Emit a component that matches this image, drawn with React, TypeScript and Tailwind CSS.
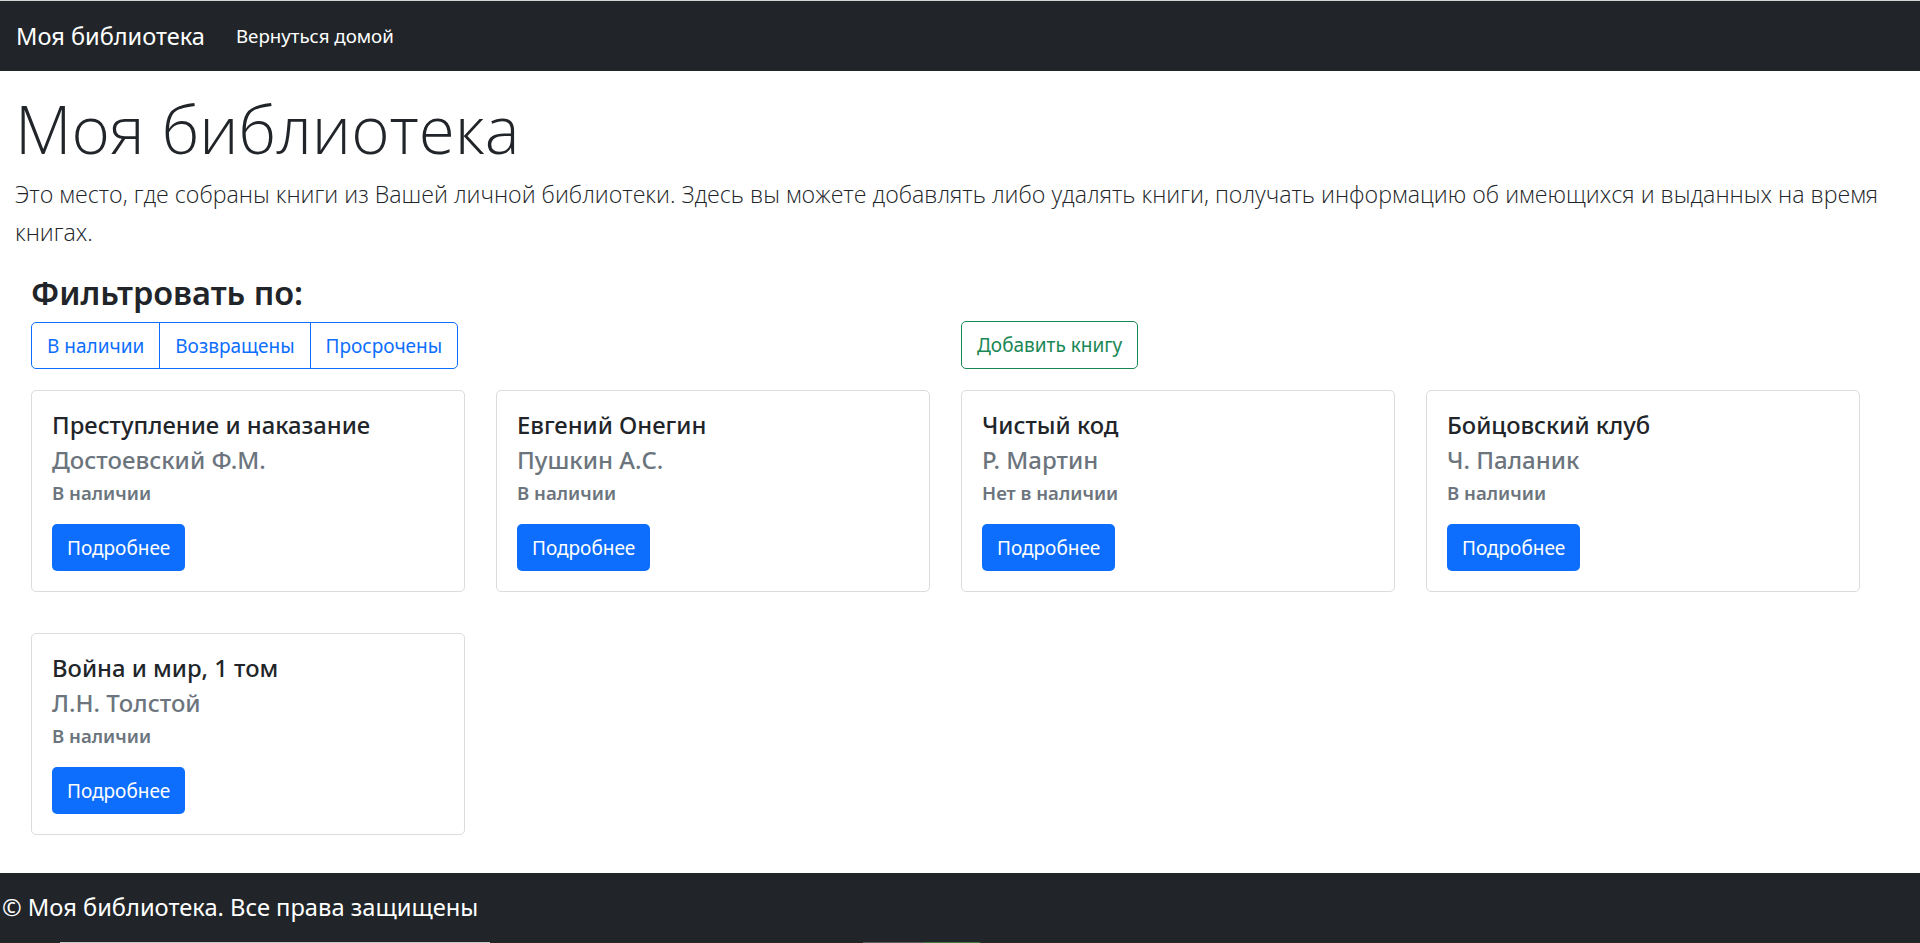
import React from 'react';

interface Book {
  id: number;
  title: string;
  author: string;
  status: string;
}

const books: Book[] = [
  { id: 1, title: 'Преступление и наказание', author: 'Достоевский Ф.М.', status: 'В наличии' },
  { id: 2, title: 'Евгений Онегин', author: 'Пушкин А.С.', status: 'В наличии' },
  { id: 3, title: 'Чистый код', author: 'Р. Мартин', status: 'Нет в наличии' },
  { id: 4, title: 'Бойцовский клуб', author: 'Ч. Паланик', status: 'В наличии' },
  { id: 5, title: 'Война и мир, 1 том', author: 'Л.Н. Толстой', status: 'В наличии' },
];

const filters = ['В наличии', 'Возвращены', 'Просрочены'];

const BookCard: React.FC<{ book: Book }> = ({ book }) => (
  <div className="h-[202px] rounded-[5px] border border-[#dcdcdc] bg-white px-[20px] pt-[19px] pb-[20px]">
    <h5 className="text-[23.8px] font-medium leading-[30px] text-[#212529]">{book.title}</h5>
    <h6 className="mt-[5px] text-[24px] font-medium leading-[30px] text-[#6c757d]">{book.author}</h6>
    <p className="mt-[6px] text-[18.6px] font-semibold leading-[24px] text-[#6c757d]">{book.status}</p>
    <button
      type="button"
      className="mt-[19px] h-[47px] rounded-[5px] bg-[#0d6efd] px-[15px] text-[19px] leading-[30px] text-white"
    >
      Подробнее
    </button>
  </div>
);

export default function App() {
  return (
    <div className="flex h-screen flex-col overflow-hidden bg-white font-['Noto_Sans',sans-serif] text-[#212529]">
      <div className="h-px bg-[#d3d3d3]" />

      <nav className="flex h-[70px] items-center bg-[#212529] pl-[16px]">
        <a href="#" className="text-[23.6px] leading-[37px] text-white">
          Моя библиотека
        </a>
        <a href="#" className="ml-[31px] text-[18.7px] leading-[30px] text-white">
          Вернуться домой
        </a>
      </nav>

      <main className="flex-1">
        <div className="px-[15px] pt-[16px] font-['Open_Sans',sans-serif]">
          <h1 className="text-[65.5px] font-light leading-[84px]">Моя библиотека</h1>
          <p className="mt-[5px] text-[23.2px] font-light leading-[37.5px]">
            Это место, где собраны книги из Вашей личной библиотеки. Здесь вы можете добавлять либо удалять
            книги, получать информацию об имеющихся и выданных на время
            <br />
            книгах.
          </p>
        </div>

        <div className="mt-[24px] grid grid-cols-[repeat(4,434px)] gap-x-[31px] pl-[31px]">
          <div className="col-span-2">
            <h3 className="text-[32.5px] font-semibold leading-[36px]">Фильтровать по:</h3>
            <div className="mt-[11px] inline-flex h-[47px] rounded-[5px] border border-[#0d6efd]">
              {filters.map((f, i) => (
                <button
                  key={f}
                  type="button"
                  className={`px-[15px] text-[19px] leading-[30px] text-[#0d6efd] ${i > 0 ? 'border-l border-[#0d6efd]' : ''}`}
                >
                  {f}
                </button>
              ))}
            </div>
          </div>
          <div className="col-span-2 flex items-end">
            <button
              type="button"
              className="h-[48px] rounded-[5px] border border-[#198754] px-[15px] text-[19px] leading-[30px] text-[#198754]"
            >
              Добавить книгу
            </button>
          </div>
        </div>

        <div className="mt-[21px] grid grid-cols-[repeat(4,434px)] gap-x-[31px] gap-y-[41px] pl-[31px]">
          {books.map((b) => (
            <BookCard key={b.id} book={b} />
          ))}
        </div>
      </main>

      <footer className="flex h-[69px] items-center bg-[#212529] pl-[2px]">
        <p className="text-[23.7px] leading-[37px] text-white">© Моя библиотека. Все права защищены</p>
      </footer>
      <div className="flex h-px bg-[#2b2620]">
        <div className="w-[60px]" />
        <div className="w-[430px] bg-[#c8c8c8]" />
        <div className="w-[373px]" />
        <div className="w-[61px] bg-[#5a5a5a]" />
        <div className="w-[56px] bg-[#3d7a3d]" />
      </div>
    </div>
  );
}
